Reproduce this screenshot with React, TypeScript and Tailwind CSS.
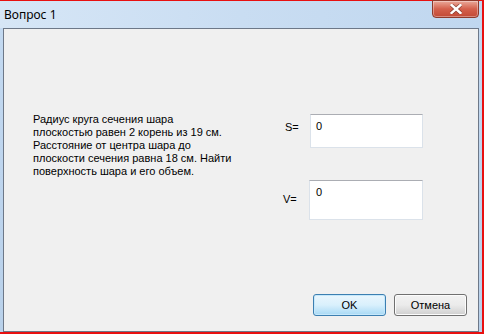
export default function App() {
  return (
    <div className="w-[487px] h-[335px] bg-white" style={{ fontFamily: "'Liberation Sans', Arial, sans-serif" }}>
      {/* окно */}
      <div className="w-[484px] h-[334px] border-t border-r-2 border-b-2 border-[#e81010] bg-gradient-to-b from-[#c4daf1] via-[#bed5ee] to-[#b9d1ea] flex flex-col">
        {/* заголовок */}
        <div className="h-[27px] flex items-start justify-between pl-[4px] pr-[3px] bg-gradient-to-r from-[#d6e6f6] via-[#c9ddf2] to-[#c0d7ef]">
          <span className="mt-[7px] text-[12px] leading-[14px] text-black" style={{ fontFamily: "'Noto Sans', sans-serif" }}>
            Вопрос 1
          </span>
          <button className="w-[47px] h-[18px] -mt-px rounded-b-[4px] border border-[#8e3a2c] bg-gradient-to-b from-[#e9a99a] via-[#d4604c] to-[#c24a36] flex items-center justify-center shadow-[inset_0_0_0_1px_rgba(255,255,255,0.35)]">
            <svg width="12" height="10" viewBox="0 0 12 10">
              <path d="M1.5 1 L10.5 9 M10.5 1 L1.5 9" stroke="#4a1a12" strokeWidth="4" strokeLinecap="square" opacity="0.5" />
              <path d="M1.5 1 L10.5 9 M10.5 1 L1.5 9" stroke="#ffffff" strokeWidth="2.4" strokeLinecap="square" />
            </svg>
          </button>
        </div>

        {/* клиентская область */}
        <div className="ml-[3px] w-[476px] h-[304px] border border-[#6d7888] bg-[#f0f0f0] flex flex-col text-[11px] leading-[13px] text-black">
          <div className="mt-[84px] flex">
            <p className="ml-[29px] w-[250px]">
              Радиус круга сечения шара
              <br />
              плоскостью равен 2 корень из 19 см.
              <br />
              Расстояние от центра шара до
              <br />
              плоскости сечения равна 18 см. Найти
              <br />
              поверхность шара и его объем.
            </p>
            <div className="flex flex-col gap-[32px] mt-px">
              <div className="flex items-start">
                <span className="w-[27px] pl-[2px] mt-[7px]">S=</span>
                <div className="w-[113px] h-[34px] bg-white border border-[#dbe2ea] border-t-[#abadb3] pl-[5px] pt-[5px]">0</div>
              </div>
              <div className="flex items-start">
                <span className="w-[26px] mt-[13px]">V=</span>
                <div className="w-[114px] h-[40px] bg-white border border-[#dbe2ea] border-t-[#abadb3] pl-[6px] pt-[5px]">0</div>
              </div>
            </div>
          </div>

          <div className="mt-auto mb-[15px] mr-[11px] flex justify-end gap-[8px]">
            <button className="w-[73px] h-[22px] rounded-[3px] border border-[#3c7fb1] bg-gradient-to-b from-[#eaf6fd] via-[#d9f0fc] to-[#a7d9f5] shadow-[inset_0_0_0_1px_#c6e8fb] text-[11px] text-black">
              OK
            </button>
            <button className="w-[73px] h-[22px] rounded-[3px] border border-[#707070] bg-gradient-to-b from-[#f2f2f2] via-[#ebebeb] to-[#cfcfcf] shadow-[inset_0_0_0_1px_#fcfcfc] text-[11px] text-black">
              Отмена
            </button>
          </div>
        </div>
      </div>
    </div>
  )
}
